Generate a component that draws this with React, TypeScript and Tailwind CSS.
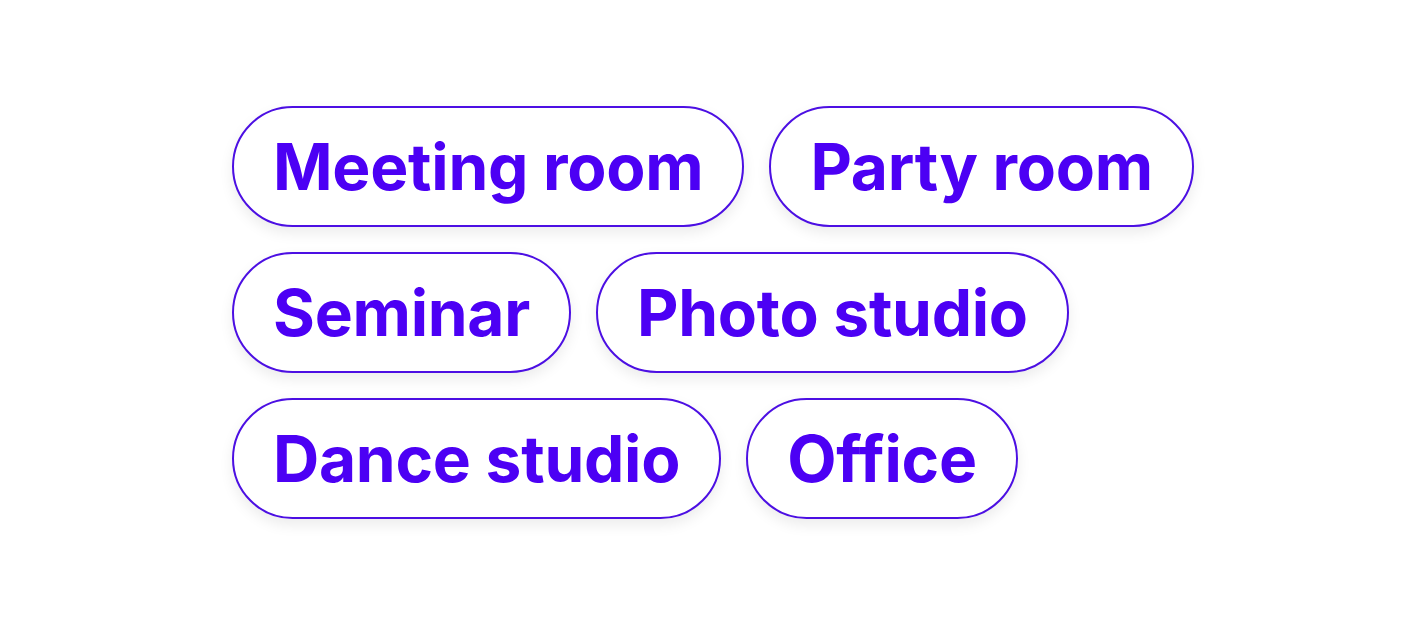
import React from 'react';

const tags = ['Meeting room', 'Party room', 'Seminar', 'Photo studio', 'Dance studio', 'Office'];

export default function App() {
  return (
    <div className="flex h-screen w-full items-center bg-white pl-[232px]" style={{ fontFamily: 'Inter, "Noto Sans", sans-serif' }}>
      <div className="flex w-[965px] flex-wrap gap-[25px]">
        {tags.map((tag) => (
          <button
            key={tag}
            className="rounded-full border-2 border-[#4c0fe3] bg-white px-[39px] py-[20px] text-[64px] leading-[77px] font-bold tracking-[-0.004em] text-[#4c00f4] shadow-[0_6px_14px_rgba(0,0,0,0.08)]"
          >
            {tag}
          </button>
        ))}
      </div>
    </div>
  );
}
